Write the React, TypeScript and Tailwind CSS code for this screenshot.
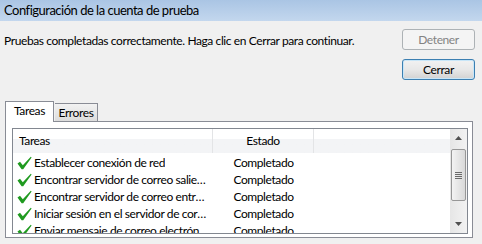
import React from "react";

const rows = [
  "Establecer conexión de red",
  "Encontrar servidor de correo saliente (SMTP)",
  "Encontrar servidor de correo entrante (POP3)",
  "Iniciar sesión en el servidor de correo entrante",
  "Enviar mensaje de correo electrónico de prueba",
];

const Check = () => (
  <svg width="15" height="14" viewBox="0 0 15 14" className="shrink-0">
    <path
      d="M0.5 7.5 L3 5.8 L5.8 9.2 L13.8 0.8 L14.6 1.6 L6.2 13.2 L4.6 13.2 Z"
      fill="#1f9a1f"
    />
  </svg>
);

const ScrollBar = () => (
  <div className="flex w-[17px] shrink-0 flex-col bg-gradient-to-r from-[#e6e6e6] to-[#f2f2f2]">
    <div className="flex h-[18px] items-center justify-center">
      <svg width="7" height="4" viewBox="0 0 7 4">
        <path d="M0 4 L3.5 0 L7 4 Z" fill="#505050" />
      </svg>
    </div>
    <div className="mx-[1px] mt-[2px] flex h-[52px] items-center justify-center rounded-[2px] border border-[#979797] bg-gradient-to-r from-[#f3f3f3] to-[#d9d9d9]">
      <div className="flex flex-col gap-[1px]">
        <div className="h-px w-[7px] bg-[#6a6a6a]" />
        <div className="h-px w-[7px] bg-[#6a6a6a]" />
        <div className="h-px w-[7px] bg-[#6a6a6a]" />
        <div className="h-px w-[7px] bg-[#6a6a6a]" />
      </div>
    </div>
    <div className="flex-1" />
    <div className="flex h-[18px] items-center justify-center">
      <svg width="7" height="4" viewBox="0 0 7 4">
        <path d="M0 0 L7 0 L3.5 4 Z" fill="#505050" />
      </svg>
    </div>
  </div>
);

export default function App() {
  return (
    <div
      className="h-[244px] w-[482px] overflow-hidden bg-[#f0f0f0] text-black tracking-[-0.4px]"
      style={{ fontFamily: 'Lato, "Noto Sans", sans-serif' }}
    >
      <div className="flex h-[21px] items-center bg-gradient-to-b from-[#aac5e4] to-[#c3d7ee] pl-[4px] text-[13px] tracking-[-0.5px]">
        Configuración de la cuenta de prueba
      </div>

      <div className="flex justify-between pl-[4px] pr-[7px]">
        <p className="mt-[11px] text-[12px]">
          Pruebas completadas correctamente. Haga clic en Cerrar para continuar.
        </p>
        <div className="mt-[8px] flex flex-col gap-[9px]">
          <button className="flex h-[21px] w-[73px] items-center justify-center rounded-[3px] border border-[#adb2b5] bg-[#f4f4f4] text-[12px] text-[#838383]">
            Detener
          </button>
          <button className="flex h-[21px] w-[73px] items-center justify-center rounded-[3px] border border-[#3c7fb1] bg-gradient-to-b from-[#f2f2f2] via-[#e8e8e8] to-[#d2d2d2] text-[12px] shadow-[inset_0_0_0_1px_#c8e6f8]">
            Cerrar
          </button>
        </div>
      </div>

      <div className="mt-[21px] pl-[5px]">
        <div className="flex h-[20px] items-end text-[12px]">
          <div className="relative z-10 -mb-px flex h-[21px] w-[49px] items-center justify-center border border-b-0 border-[#898c95] bg-white pb-[2px]">
            Tareas
          </div>
          <div className="ml-[1px] flex h-[18px] w-[43px] items-center justify-center border border-b-0 border-l-0 border-[#898c95] bg-gradient-to-b from-[#f2f2f2] to-[#dcdcdc]">
            Errores
          </div>
        </div>

        <div className="h-[117px] w-[468px] border border-[#898c95] bg-white pb-[3px] pl-[6px] pr-[4px] pt-[6px]">
          <div className="flex h-[106px] w-[456px] overflow-hidden border border-[#828790] bg-white text-[12px]">
            <div className="flex min-w-0 flex-1 flex-col overflow-hidden">
              <div className="flex h-[24px] shrink-0 bg-gradient-to-b from-white from-40% to-[#f3f4f6] to-40%">
                <div className="flex w-[200px] items-center border-r border-[#e3e4e6] pl-[6px]">
                  Tareas
                </div>
                <div className="flex w-[101px] items-center justify-center border-r border-[#e3e4e6]">
                  Estado
                </div>
                <div className="flex-1" />
              </div>
              <div className="flex flex-col pt-[1px] leading-[15px]">
                {rows.map((r) => (
                  <div key={r} className="flex h-[17px] shrink-0 items-center">
                    <div className="flex w-[200px] items-center gap-[2px] pl-[4px] pr-[4px]">
                      <Check />
                      <span className="truncate">{r}</span>
                    </div>
                    <div className="flex w-[101px] justify-center">Completado</div>
                  </div>
                ))}
              </div>
            </div>
            <ScrollBar />
          </div>
        </div>
      </div>
    </div>
  );
}
